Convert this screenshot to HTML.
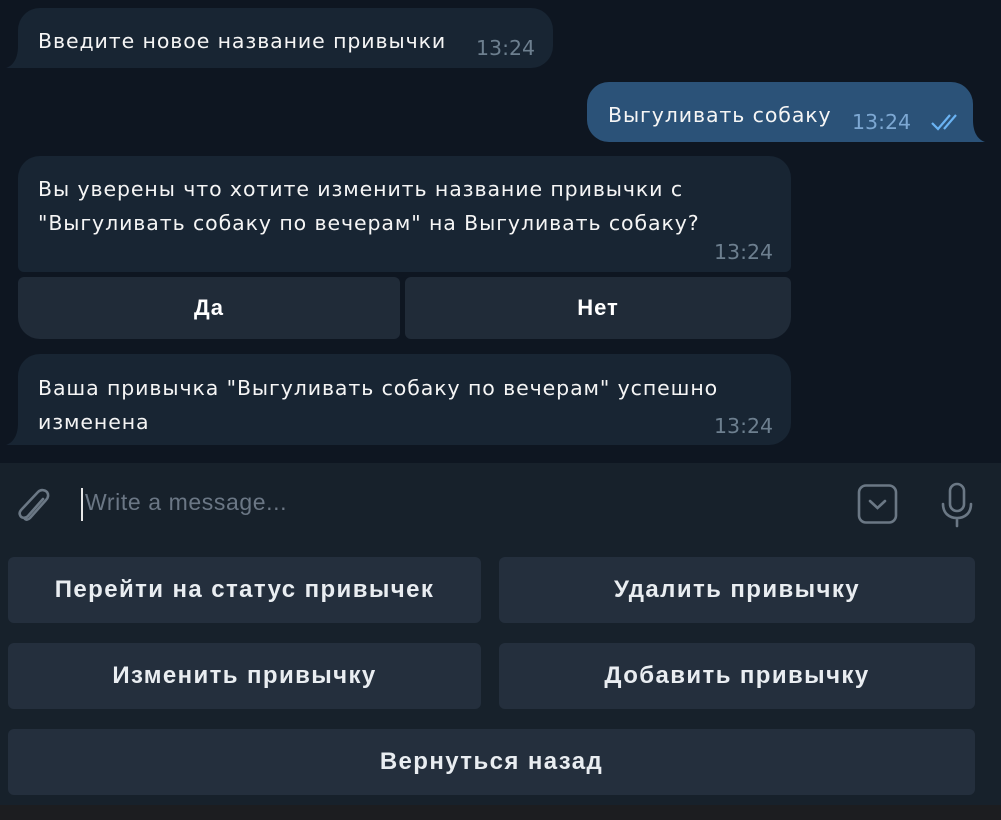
<!DOCTYPE html>
<html><head><meta charset="utf-8"><style>
*{margin:0;padding:0;box-sizing:border-box}
body{width:1001px;height:820px;background:#0e1621;font-family:"Liberation Sans","DejaVu Sans",sans-serif;position:relative;overflow:hidden;color:#f5f5f5}
.b{position:absolute;background:#182533;border-radius:22px}
.m{position:absolute;font-family:"DejaVu Sans",sans-serif;font-size:20.5px;line-height:34px;letter-spacing:0.9px;white-space:nowrap}
.t{position:absolute;color:#6d7f8f;font-family:"DejaVu Sans",sans-serif;font-size:20.5px}
.tail{position:absolute}
.btn{position:absolute;background:#202b38;color:#fff;font-weight:bold;font-size:22px;letter-spacing:1px;display:flex;align-items:center;justify-content:center;border-radius:12px}
.k{position:absolute;background:#242f3d;color:#e9edf1;font-weight:bold;font-size:24px;letter-spacing:1.4px;display:flex;align-items:center;justify-content:center;border-radius:6px}
</style></head><body>
<!-- bubble 1 -->
<div class="b" style="left:18px;top:8px;width:535px;height:60px;border-bottom-left-radius:0"></div>
<svg class="tail" style="left:6px;top:46px" width="14" height="22"><path d="M12 0 V22 H0 C6 20 12 14 12 0Z" fill="#182533"/></svg>
<div class="m" style="left:38px;top:24px">Введите новое название привычки</div>
<div class="t" style="left:476px;top:36px">13:24</div>

<!-- bubble 2 -->
<div class="b" style="left:587px;top:82px;width:386px;height:60px;background:#2b5278;border-bottom-right-radius:0"></div>
<svg class="tail" style="left:971px;top:120px" width="14" height="22"><path d="M2 0 V22 H14 C8 20 2 14 2 0Z" fill="#2b5278"/></svg>
<div class="m" style="left:608px;top:98px">Выгуливать собаку</div>
<div class="t" style="left:852px;top:110px;color:#7da8d3">13:24</div>
<svg style="position:absolute;left:930px;top:112px" width="34" height="20" viewBox="0 0 34 20"><path d="M2 11 L8 17 L20 3 M14 17 L26 3" stroke="#6ab3f3" stroke-width="2.2" fill="none"/></svg>

<!-- bubble 3 -->
<div class="b" style="left:18px;top:156px;width:773px;height:116px;border-bottom-left-radius:6px;border-bottom-right-radius:6px"></div>
<div class="m" style="left:38px;top:172px">Вы уверены что хотите изменить название привычки с<br>"Выгуливать собаку по вечерам" на Выгуливать собаку?</div>
<div class="t" style="left:714px;top:240px">13:24</div>

<div class="btn" style="left:18px;top:277px;width:382px;height:62px;border-radius:6px 6px 6px 22px">Да</div>
<div class="btn" style="left:405px;top:277px;width:386px;height:62px;border-radius:6px 6px 22px 6px">Нет</div>

<!-- bubble 4 -->
<div class="b" style="left:18px;top:354px;width:773px;height:91px;border-bottom-left-radius:0"></div>
<svg class="tail" style="left:6px;top:423px" width="14" height="22"><path d="M12 0 V22 H0 C6 20 12 14 12 0Z" fill="#182533"/></svg>
<div class="m" style="left:38px;top:371px">Ваша привычка "Выгуливать собаку по вечерам" успешно<br>изменена</div>
<div class="t" style="left:714px;top:414px">13:24</div>

<!-- input area -->
<div style="position:absolute;left:0;top:463px;width:1001px;height:342px;background:#17212b"></div>
<svg style="position:absolute;left:14px;top:485px" width="40" height="42" viewBox="0 0 40 42"><path d="M29 14 L14 31 C11 34 7 33 6 30 C5 28 6 26 8 24 L24 7 C27 4 31 5 33 7 C35 10 34 13 32 15 L16 33 C14 35 12 35 11 34" stroke="#6b7885" stroke-width="2.6" fill="none" stroke-linecap="round"/></svg>
<div style="position:absolute;left:81px;top:488px;width:2px;height:33px;background:#e8e8e8"></div>
<div style="position:absolute;left:85px;top:489px;font-size:23px;letter-spacing:0.6px;color:#6b7785">Write a message...</div>
<svg style="position:absolute;left:856px;top:483px" width="44" height="42" viewBox="0 0 44 42"><rect x="3" y="2.5" width="37" height="37" rx="7" stroke="#6b7885" stroke-width="2.6" fill="none"/><path d="M14 18 L21.5 25 L29 18" stroke="#6b7885" stroke-width="2.6" fill="none" stroke-linecap="round"/></svg>
<svg style="position:absolute;left:938px;top:482px" width="38" height="46" viewBox="0 0 38 46"><rect x="12" y="2" width="14" height="27" rx="7" stroke="#6b7885" stroke-width="2.6" fill="none"/><path d="M5 22 C5 31 11 36 19 36 C27 36 33 31 33 22 M19 36 V44" stroke="#6b7885" stroke-width="2.6" fill="none" stroke-linecap="round"/></svg>

<div class="k" style="left:8px;top:557px;width:473px;height:66px">Перейти на статус привычек</div>
<div class="k" style="left:499px;top:557px;width:476px;height:66px">Удалить привычку</div>
<div class="k" style="left:8px;top:643px;width:473px;height:66px">Изменить привычку</div>
<div class="k" style="left:499px;top:643px;width:476px;height:66px">Добавить привычку</div>
<div class="k" style="left:8px;top:729px;width:967px;height:66px">Вернуться назад</div>
<div style="position:absolute;left:0;top:805px;width:1001px;height:15px;background:#1c1d20"></div>
</body></html>
